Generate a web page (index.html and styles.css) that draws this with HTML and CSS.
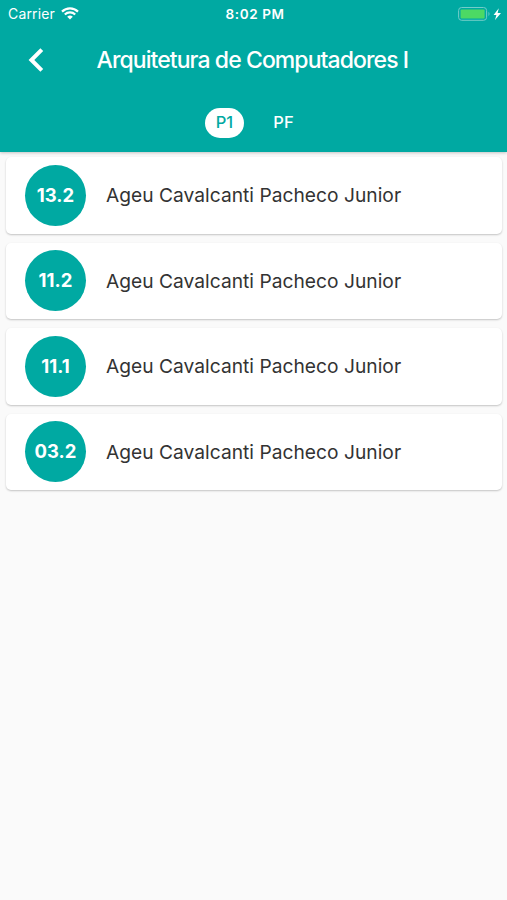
FILE: index.html
```html
<!DOCTYPE html>
<html lang="pt-BR">
<head>
    <meta charset="UTF-8">
    <meta name="viewport" content="width=device-width, initial-scale=1.0">
    <title>Arquitetura de Computadores I</title>
    <link rel="stylesheet" href="styles.css">
</head>
<body>
    <header class="app-bar">
        <div class="status-bar">
            <div class="carrier">
                <span>Carrier</span>
                <svg class="wifi" viewBox="0 0 18 13" width="18" height="13">
                    <path d="M1 4.6a11.5 11.5 0 0 1 16 0M3.8 7.5a7.5 7.5 0 0 1 10.4 0" fill="none" stroke="#fff" stroke-width="2.2"/>
                    <path d="M9 12.6l-2.8-2.8a4.2 4.2 0 0 1 5.6 0z" fill="#fff"/>
                </svg>
            </div>
            <div class="time">8:02 PM</div>
            <div class="battery">
                <svg viewBox="0 0 44 14" width="44" height="14">
                    <rect x=".6" y=".5" width="28" height="12.8" rx="3" fill="none" stroke="#73cdc9"/>
                    <rect x="2.6" y="2.4" width="24" height="9" rx="1" fill="#4cd964"/>
                    <path d="M30.5 4.8q2 2.2 0 4.5z" fill="#73cdc9"/>
                    <path d="M40.8 1.3L35.6 8h2.8l-1.4 5 6-7h-3.4z" fill="#fff"/>
                </svg>
            </div>
        </div>
        <div class="title-bar">
            <svg class="back" viewBox="0 0 16 24" width="16" height="24">
                <path d="M13.8 1.6L3.4 12l10.4 10.4" fill="none" stroke="#fff" stroke-width="4"/>
            </svg>
            <h1>Arquitetura de Computadores I</h1>
        </div>
        <nav class="tabs">
            <span class="tab active">P1</span>
            <span class="tab">PF</span>
        </nav>
    </header>
    <main class="list">
        <div class="card">
            <div class="period">13.2</div>
            <div class="teacher">Ageu Cavalcanti Pacheco Junior</div>
        </div>
        <div class="card">
            <div class="period">11.2</div>
            <div class="teacher">Ageu Cavalcanti Pacheco Junior</div>
        </div>
        <div class="card">
            <div class="period">11.1</div>
            <div class="teacher">Ageu Cavalcanti Pacheco Junior</div>
        </div>
        <div class="card">
            <div class="period">03.2</div>
            <div class="teacher">Ageu Cavalcanti Pacheco Junior</div>
        </div>
    </main>
</body>
</html>
```
FILE: styles.css
```css
* {
    box-sizing: border-box;
}
body {
    margin: 0;
    min-height: 100vh;
    font-family: Inter, sans-serif;
    background-color: #fafafa;
    color: #333;
}
.app-bar {
    position: relative;
    height: 152px;
    background-color: #00a9a2;
    color: #fff;
    box-shadow: 0 1px 3px rgba(0, 0, 0, 0.22);
}
.status-bar {
    display: grid;
    grid-template-columns: 1fr auto 1fr;
    align-items: center;
    height: 27px;
    padding: 0 5px 0 8px;
    font-size: 14px;
}
.carrier {
    display: flex;
    align-items: center;
    gap: 6px;
    letter-spacing: 0.15px;
}
.time {
    font-size: 13.5px;
    font-weight: 600;
    letter-spacing: 0.6px;
}
.battery {
    display: flex;
    justify-content: flex-end;
}
.title-bar {
    display: flex;
    align-items: center;
    height: 66px;
    padding-left: 27.5px;
}
h1 {
    margin: 0 0 0 53px;
    font-size: 23px;
    font-weight: 500;
    letter-spacing: -0.92px;
    white-space: nowrap;
}
.tabs {
    display: flex;
    justify-content: center;
    gap: 20px;
    padding: 15px 0 0 1px;
}
.tab {
    width: 39px;
    height: 30px;
    border-radius: 15px;
    font-size: 16.5px;
    font-weight: 500;
    line-height: 28px;
    text-align: center;
}
.tab.active {
    background-color: #fff;
    color: #00a9a2;
}
.list {
    display: flex;
    flex-direction: column;
    gap: 9px;
    padding: 5px 5px 0 6px;
}
.card {
    display: flex;
    align-items: center;
    gap: 20px;
    height: 76.5px;
    padding-left: 19px;
    background-color: #fff;
    border-radius: 5px;
    box-shadow: 0 1px 2px rgba(0, 0, 0, 0.22);
}
.period {
    width: 61px;
    height: 61px;
    border-radius: 50%;
    background-color: #00a9a2;
    color: #fff;
    font-size: 18.5px;
    font-weight: 700;
    line-height: 61px;
    text-align: center;
}
.teacher {
    font-size: 19.2px;
    letter-spacing: 0.02px;
    white-space: nowrap;
}
```
